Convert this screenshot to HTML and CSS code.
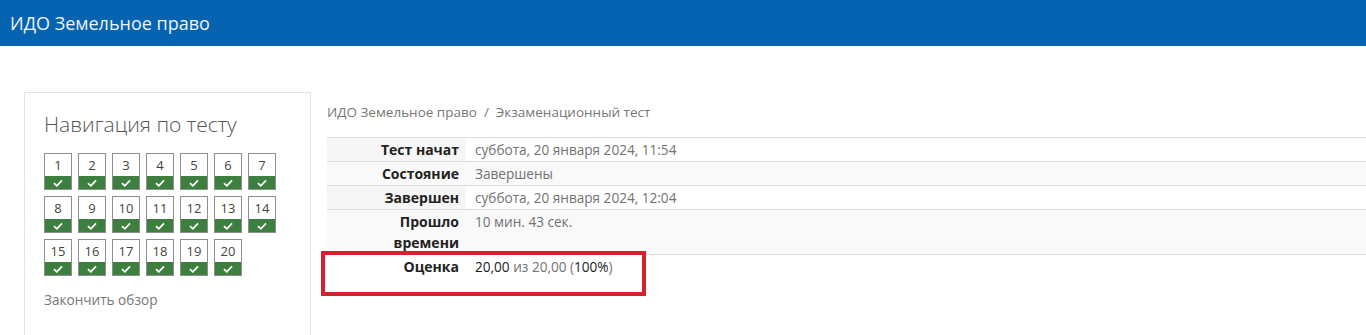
FILE: index.html
```html
<!DOCTYPE html>
<html lang="ru">
<head>
    <meta charset="UTF-8">
    <meta name="viewport" content="width=device-width, initial-scale=1.0">
    <link rel="stylesheet" href="styles.css">
</head>
<body>
    <div id="header">
        <span id="site-name">ИДО Земельное право</span>
    </div>
    <div class="page">
        <div class="nav-block">
            <h2 class="nav-title">Навигация по тесту</h2>
            <div class="nav-grid">
                <div class="qbtn"><span class="qnum">1</span><span class="qstate"><svg width="10" height="8" viewBox="0 0 10 8"><path d="M1 4.2 L3.8 6.8 L9 1.4" fill="none" stroke="#fff" stroke-width="1.8"/></svg></span></div>
                <div class="qbtn"><span class="qnum">2</span><span class="qstate"><svg width="10" height="8" viewBox="0 0 10 8"><path d="M1 4.2 L3.8 6.8 L9 1.4" fill="none" stroke="#fff" stroke-width="1.8"/></svg></span></div>
                <div class="qbtn"><span class="qnum">3</span><span class="qstate"><svg width="10" height="8" viewBox="0 0 10 8"><path d="M1 4.2 L3.8 6.8 L9 1.4" fill="none" stroke="#fff" stroke-width="1.8"/></svg></span></div>
                <div class="qbtn"><span class="qnum">4</span><span class="qstate"><svg width="10" height="8" viewBox="0 0 10 8"><path d="M1 4.2 L3.8 6.8 L9 1.4" fill="none" stroke="#fff" stroke-width="1.8"/></svg></span></div>
                <div class="qbtn"><span class="qnum">5</span><span class="qstate"><svg width="10" height="8" viewBox="0 0 10 8"><path d="M1 4.2 L3.8 6.8 L9 1.4" fill="none" stroke="#fff" stroke-width="1.8"/></svg></span></div>
                <div class="qbtn"><span class="qnum">6</span><span class="qstate"><svg width="10" height="8" viewBox="0 0 10 8"><path d="M1 4.2 L3.8 6.8 L9 1.4" fill="none" stroke="#fff" stroke-width="1.8"/></svg></span></div>
                <div class="qbtn"><span class="qnum">7</span><span class="qstate"><svg width="10" height="8" viewBox="0 0 10 8"><path d="M1 4.2 L3.8 6.8 L9 1.4" fill="none" stroke="#fff" stroke-width="1.8"/></svg></span></div>
                <div class="qbtn"><span class="qnum">8</span><span class="qstate"><svg width="10" height="8" viewBox="0 0 10 8"><path d="M1 4.2 L3.8 6.8 L9 1.4" fill="none" stroke="#fff" stroke-width="1.8"/></svg></span></div>
                <div class="qbtn"><span class="qnum">9</span><span class="qstate"><svg width="10" height="8" viewBox="0 0 10 8"><path d="M1 4.2 L3.8 6.8 L9 1.4" fill="none" stroke="#fff" stroke-width="1.8"/></svg></span></div>
                <div class="qbtn"><span class="qnum">10</span><span class="qstate"><svg width="10" height="8" viewBox="0 0 10 8"><path d="M1 4.2 L3.8 6.8 L9 1.4" fill="none" stroke="#fff" stroke-width="1.8"/></svg></span></div>
                <div class="qbtn"><span class="qnum">11</span><span class="qstate"><svg width="10" height="8" viewBox="0 0 10 8"><path d="M1 4.2 L3.8 6.8 L9 1.4" fill="none" stroke="#fff" stroke-width="1.8"/></svg></span></div>
                <div class="qbtn"><span class="qnum">12</span><span class="qstate"><svg width="10" height="8" viewBox="0 0 10 8"><path d="M1 4.2 L3.8 6.8 L9 1.4" fill="none" stroke="#fff" stroke-width="1.8"/></svg></span></div>
                <div class="qbtn"><span class="qnum">13</span><span class="qstate"><svg width="10" height="8" viewBox="0 0 10 8"><path d="M1 4.2 L3.8 6.8 L9 1.4" fill="none" stroke="#fff" stroke-width="1.8"/></svg></span></div>
                <div class="qbtn"><span class="qnum">14</span><span class="qstate"><svg width="10" height="8" viewBox="0 0 10 8"><path d="M1 4.2 L3.8 6.8 L9 1.4" fill="none" stroke="#fff" stroke-width="1.8"/></svg></span></div>
                <div class="qbtn"><span class="qnum">15</span><span class="qstate"><svg width="10" height="8" viewBox="0 0 10 8"><path d="M1 4.2 L3.8 6.8 L9 1.4" fill="none" stroke="#fff" stroke-width="1.8"/></svg></span></div>
                <div class="qbtn"><span class="qnum">16</span><span class="qstate"><svg width="10" height="8" viewBox="0 0 10 8"><path d="M1 4.2 L3.8 6.8 L9 1.4" fill="none" stroke="#fff" stroke-width="1.8"/></svg></span></div>
                <div class="qbtn"><span class="qnum">17</span><span class="qstate"><svg width="10" height="8" viewBox="0 0 10 8"><path d="M1 4.2 L3.8 6.8 L9 1.4" fill="none" stroke="#fff" stroke-width="1.8"/></svg></span></div>
                <div class="qbtn"><span class="qnum">18</span><span class="qstate"><svg width="10" height="8" viewBox="0 0 10 8"><path d="M1 4.2 L3.8 6.8 L9 1.4" fill="none" stroke="#fff" stroke-width="1.8"/></svg></span></div>
                <div class="qbtn"><span class="qnum">19</span><span class="qstate"><svg width="10" height="8" viewBox="0 0 10 8"><path d="M1 4.2 L3.8 6.8 L9 1.4" fill="none" stroke="#fff" stroke-width="1.8"/></svg></span></div>
                <div class="qbtn"><span class="qnum">20</span><span class="qstate"><svg width="10" height="8" viewBox="0 0 10 8"><path d="M1 4.2 L3.8 6.8 L9 1.4" fill="none" stroke="#fff" stroke-width="1.8"/></svg></span></div>
            </div>
            <a class="finish-link" href="#">Закончить обзор</a>
        </div>
        <div class="main">
            <div class="breadcrumb">ИДО Земельное право&nbsp; / &nbsp;Экзаменационный тест</div>
            <div class="summary-wrap">
                <table class="summary">
                    <tr>
                        <th>Тест начат</th>
                        <td>суббота, 20 января 2024, 11:54</td>
                    </tr>
                    <tr class="striped">
                        <th>Состояние</th>
                        <td>Завершены</td>
                    </tr>
                    <tr>
                        <th>Завершен</th>
                        <td>суббота, 20 января 2024, 12:04</td>
                    </tr>
                    <tr class="striped">
                        <th>Прошло времени</th>
                        <td>10 мин. 43 сек.</td>
                    </tr>
                    <tr class="last">
                        <th>Оценка</th>
                        <td><b class="grade">20,00</b> из 20,00 (<b class="grade">100%</b>)</td>
                    </tr>
                </table>
                <div class="highlight"></div>
            </div>
        </div>
    </div>
</body>
</html>
```

FILE: styles.css
```css
body {
    margin: 0;
    background-color: #ffffff;
    font-family: "Open Sans", "Noto Sans", sans-serif;
    color: #333;
    overflow: hidden;
}
#header {
    height: 46px;
    background-color: #0563b2;
    display: flex;
    align-items: center;
    padding-left: 10px;
}
#site-name {
    color: #eef4fb;
    font-size: 18px;
    margin-top: -1px;
}
.page {
    display: flex;
    align-items: flex-start;
    gap: 16px;
    padding: 46px 0 0 24px;
}
.nav-block {
    width: 287px;
    height: 243px;
    flex-shrink: 0;
    box-sizing: border-box;
    border: 1px solid #e3e3e3;
    border-bottom: none;
    padding: 17px 19px;
}
.nav-title {
    margin: 0;
    font-size: 21px;
    font-weight: 300;
    line-height: 28px;
    color: #555;
}
.nav-grid {
    display: grid;
    grid-template-columns: repeat(7, 28px);
    column-gap: 6px;
    row-gap: 6px;
    margin-top: 15px;
}
.qbtn {
    width: 28px;
    height: 37px;
    box-sizing: border-box;
    border: 1px solid #8f8f8f;
    display: flex;
    flex-direction: column;
}
.qnum {
    height: 22px;
    font-size: 13px;
    line-height: 22px;
    text-align: center;
    color: #444;
    background: #fff;
}
.qstate {
    flex: 1;
    background-color: #3c7f3e;
    display: flex;
    align-items: center;
    justify-content: center;
}
.finish-link {
    display: block;
    margin-top: 14px;
    font-size: 13.6px;
    line-height: 20px;
    color: #777;
    text-decoration: none;
}
.main {
    flex: 1;
    padding-top: 10px;
}
.breadcrumb {
    font-size: 13.5px;
    line-height: 20px;
    color: #777;
}
.summary-wrap {
    position: relative;
    margin-top: 15px;
}
.summary {
    border-collapse: collapse;
    width: 100%;
    font-size: 14px;
    line-height: 21px;
}
.summary th, .summary td {
    border-top: 1px solid #dddddd;
    padding: 1px 0;
    vertical-align: top;
}
.summary th {
    width: 100px;
    padding-left: 32px;
    padding-right: 7px;
    text-align: right;
    font-weight: bold;
    color: #222;
    background-color: #f6f6f6;
}
.summary td {
    padding-left: 9px;
    font-size: 13.6px;
    color: #727272;
}
.summary tr.striped th, .summary tr.striped td {
    background-color: #f9f9f9;
}
.summary tr.last th {
    background-color: #fff;
}
.summary tr.last td {
    height: 42px;
}
.grade {
    font-weight: normal;
    color: #222;
}
.highlight {
    position: absolute;
    left: -6px;
    top: 114px;
    width: 325px;
    height: 45px;
    box-sizing: border-box;
    border: 4px solid #d3232f;
}
```
